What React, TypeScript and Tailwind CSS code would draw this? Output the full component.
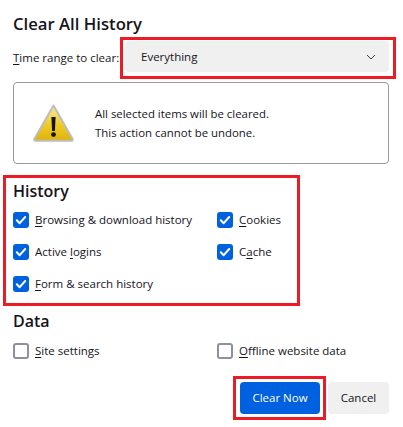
import type { ReactNode } from "react";

function Key({ children }: { children: ReactNode }) {
  return <span className="underline underline-offset-2 decoration-1">{children}</span>;
}

function Box({ checked, children }: { checked?: boolean; children: ReactNode }) {
  return (
    <div className="flex h-4 items-center gap-1.5">
      {checked ? (
        <span className="flex size-4 items-center justify-center rounded-[3px] bg-[#0061e0]">
          <svg className="size-4" viewBox="0 0 16 16" fill="none" stroke="#fff" strokeWidth="2" strokeLinecap="round" strokeLinejoin="round">
            <path d="M3.8 8.3l2.9 2.9 5.5-6.2" />
          </svg>
        </span>
      ) : (
        <span className="size-4 rounded-[3px] border-2 border-[#8f8f9d] bg-white" />
      )}
      <span className="whitespace-nowrap">{children}</span>
    </div>
  );
}

function WarningIcon() {
  return (
    <svg className="h-[40px] w-[44px]" viewBox="0 0 44 40">
      <defs>
        <linearGradient id="warnFill" x1="0" y1="0" x2="0" y2="1">
          <stop offset="0" stopColor="#f9ec9a" />
          <stop offset="0.55" stopColor="#efcb26" />
          <stop offset="1" stopColor="#dfb20e" />
        </linearGradient>
      </defs>
      <path d="M21.5 2.5L40.6 36a1.2 1.2 0 0 1-1 1.8H3.4a1.2 1.2 0 0 1-1-1.8Z" fill="url(#warnFill)" stroke="#bdbdbd" strokeWidth="2" strokeLinejoin="round" />
      <path d="M19.4 14h4.2l-.7 14h-2.8Z" fill="#17130a" />
      <circle cx="21.5" cy="31.6" r="2.4" fill="#17130a" />
    </svg>
  );
}

export default function App() {
  return (
    <div className="h-[427px] w-[403px] overflow-hidden bg-white pl-[13px] pt-3 font-['Open_Sans','Noto_Sans',sans-serif] text-[11.5px] text-[#15141a]">
      <h1 className="h-6 text-[16.7px] font-semibold leading-6">Clear All History</h1>

      <div className="mt-px flex items-center">
        <label className="w-[104px] whitespace-nowrap">
          <Key>T</Key>ime range to clear:
        </label>
        <div className="ml-[3px] h-[42px] w-[276px] border-[3px] border-[#ed1c24] pl-0.5 pt-px">
          <div className="flex h-[31px] w-[264px] items-center justify-between rounded bg-[#f0f0f0] pl-4 pr-3">
            <span>Everything</span>
            <svg className="size-3" viewBox="0 0 12 12" fill="none" stroke="#3a3a40" strokeWidth="1">
              <path d="M2 4L6 8l4-4" />
            </svg>
          </div>
        </div>
      </div>

      <div className="mt-[3px] flex h-[82px] w-[376px] items-center rounded border border-[#9a9a9a] pl-[18px]">
        <WarningIcon />
        <div className="ml-[19px] text-[11.4px] leading-[19px]">
          <p>All selected items will be cleared.</p>
          <p>This action cannot be undone.</p>
        </div>
      </div>

      <section className="-ml-[10px] mt-[11px] h-[131px] w-[297px] border-[3px] border-[#ed1c24] pl-[7px]">
        <h2 className="mt-px h-6 text-[16px] font-semibold leading-6">History</h2>
        <div className="mt-[9px] grid grid-cols-[204px_1fr] gap-y-4">
          <Box checked><Key>B</Key>rowsing &amp; download history</Box>
          <Box checked><Key>C</Key>ookies</Box>
          <Box checked>Active <Key>l</Key>ogins</Box>
          <Box checked>C<Key>a</Key>che</Box>
          <Box checked><Key>F</Key>orm &amp; search history</Box>
        </div>
      </section>

      <section className="mt-[3px]">
        <h2 className="h-6 text-[16px] font-semibold leading-6">Data</h2>
        <div className="mt-2.5 grid grid-cols-[204px_1fr]">
          <Box><Key>S</Key>ite settings</Box>
          <Box><Key>O</Key>ffline website data</Box>
        </div>
      </section>

      <div className="ml-[220px] mt-[17px] flex w-[156px] items-center">
        <div className="h-11 w-[93px] border-[3px] border-[#ed1c24] pl-1 pt-[3px]">
          <button className="h-8 w-20 rounded bg-[#0061e0] text-white">Clear Now</button>
        </div>
        <button className="ml-0.5 h-8 w-[61px] rounded bg-[#f0f0f0]">Cancel</button>
      </div>
    </div>
  );
}
